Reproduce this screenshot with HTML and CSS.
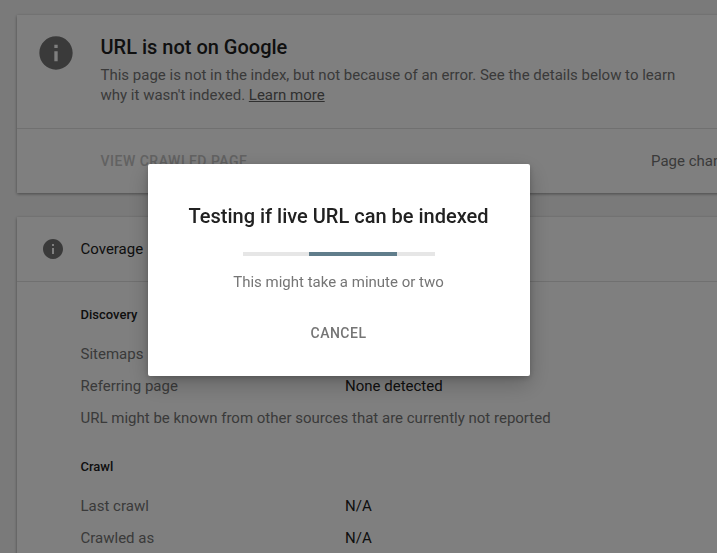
FILE: index.html
```html
<!DOCTYPE html>
<html lang="en">
<head>
<meta charset="utf-8">
<title>URL Inspection</title>
<link rel="stylesheet" href="styles.css">
</head>
<body>
<main class="page">
  <section class="card verdict">
    <div class="verdict-head">
      <svg class="icon-lg" viewBox="0 0 24 24"><path fill="currentColor" d="M12 2C6.48 2 2 6.48 2 12s4.48 10 10 10 10-4.48 10-10S17.52 2 12 2zm1 15h-2v-6h2v6zm0-8h-2V7h2v2z"/></svg>
      <div class="verdict-text">
        <h1>URL is not on Google</h1>
        <p>This page is not in the index, but not because of an error. See the details below to learn why it wasn't indexed. <a href="#">Learn more</a></p>
      </div>
    </div>
    <div class="verdict-actions">
      <span class="view-link">VIEW CRAWLED PAGE</span>
      <span class="page-changed">Page changed?</span>
    </div>
  </section>
  <section class="card coverage">
    <div class="coverage-head">
      <svg class="icon-sm" viewBox="0 0 24 24"><path fill="currentColor" d="M12 2C6.48 2 2 6.48 2 12s4.48 10 10 10 10-4.48 10-10S17.52 2 12 2zm1 15h-2v-6h2v6zm0-8h-2V7h2v2z"/></svg>
      <span>Coverage</span>
    </div>
    <div class="coverage-body">
      <h2>Discovery</h2>
      <div class="rows">
        <div class="row"><span class="label">Sitemaps</span><span class="value">N/A</span></div>
        <div class="row"><span class="label">Referring page</span><span class="value">None detected</span></div>
        <div class="row"><span class="label">URL might be known from other sources that are currently not reported</span></div>
      </div>
      <h2 class="crawl">Crawl</h2>
      <div class="rows">
        <div class="row"><span class="label">Last crawl</span><span class="value">N/A</span></div>
        <div class="row"><span class="label">Crawled as</span><span class="value">N/A</span></div>
      </div>
    </div>
  </section>
</main>
<div class="overlay">
  <div class="dialog" role="dialog">
    <h3>Testing if live URL can be indexed</h3>
    <div class="progress"><div class="progress-bar"></div></div>
    <p>This might take a minute or two</p>
    <button class="cancel" type="button">CANCEL</button>
  </div>
</div>
</body>
</html>
```

FILE: styles.css
```css
* { box-sizing: border-box; }
html, body { margin: 0; height: 100%; overflow: hidden; }
body { background: #f5f5f5; font-family: Roboto, "Liberation Sans", sans-serif; color: #212121; }
.page { width: 800px; padding: 15px 0 0 17px; display: flex; flex-direction: column; gap: 24px; }
.card { background: #fff; box-shadow: 0 1px 3px rgba(0,0,0,.4); }
.verdict-head { display: flex; padding: 17px 0 0 23px; border-bottom: 1px solid #e0e0e0; height: 114px; }
.icon-lg { width: 40px; height: 40px; color: #757575; margin: 1px 0 0 -4px; flex: none; }
.verdict-text { margin-left: 24.5px; width: 590px; }
h1 { margin: 0 0 3px; font-size: 20px; line-height: 30px; font-weight: 500; }
.verdict-text p { margin: 0; font-size: 15px; line-height: 20px; color: #757575; }
.verdict-text a { color: #616161; }
.verdict-actions { display: flex; align-items: center; height: 64px; padding-left: 83.5px; font-size: 14px; }
.view-link { font-weight: 500; letter-spacing: .5px; color: #c4c4c4; }
.page-changed { margin-left: 403.5px; font-size: 15px; color: #757575; }
.coverage-head { display: flex; align-items: center; height: 65px; padding-left: 24px; border-bottom: 1px solid #e0e0e0; font-size: 15px; }
.icon-sm { width: 24px; height: 24px; color: #757575; flex: none; margin-right: 15.5px; }
.coverage-body { padding: 24px 0 64px 63.5px; }
h2 { margin: 0 0 14px; font-size: 13px; line-height: 18px; font-weight: 500; }
.rows { display: flex; flex-direction: column; }
.row { display: flex; height: 32px; align-items: center; font-size: 15px; }
.label { color: #757575; }
.row .label:not(:only-child) { width: 264.5px; }
h2.crawl { margin: 24px 0 14px; }
.overlay { position: fixed; inset: 0; background: rgba(0,0,0,.5); padding: 164px 0 0 148px; }
.dialog { width: 382px; height: 212px; background: #fff; border-radius: 2px; box-shadow: 0 8px 22px rgba(0,0,0,.22), 0 2px 6px rgba(0,0,0,.2); display: flex; flex-direction: column; align-items: center; padding: 38px 1px 0 0; }
h3 { margin: 0; font-size: 20px; line-height: 28px; font-weight: 500; color: #212121; }
.progress { width: 192px; height: 4px; background: #e6e6e6; margin: 22px 0 0 1px; }
.progress-bar { width: 88px; height: 4px; background: #607d8b; margin-left: 66px; }
.dialog p { margin: 16px 0 0; font-size: 15px; line-height: 20px; color: #757575; }
.cancel { margin-top: 31px; padding: 0; border: 0; background: none; font: 500 14px/20px Roboto, sans-serif; letter-spacing: .5px; color: #757575; }
```
